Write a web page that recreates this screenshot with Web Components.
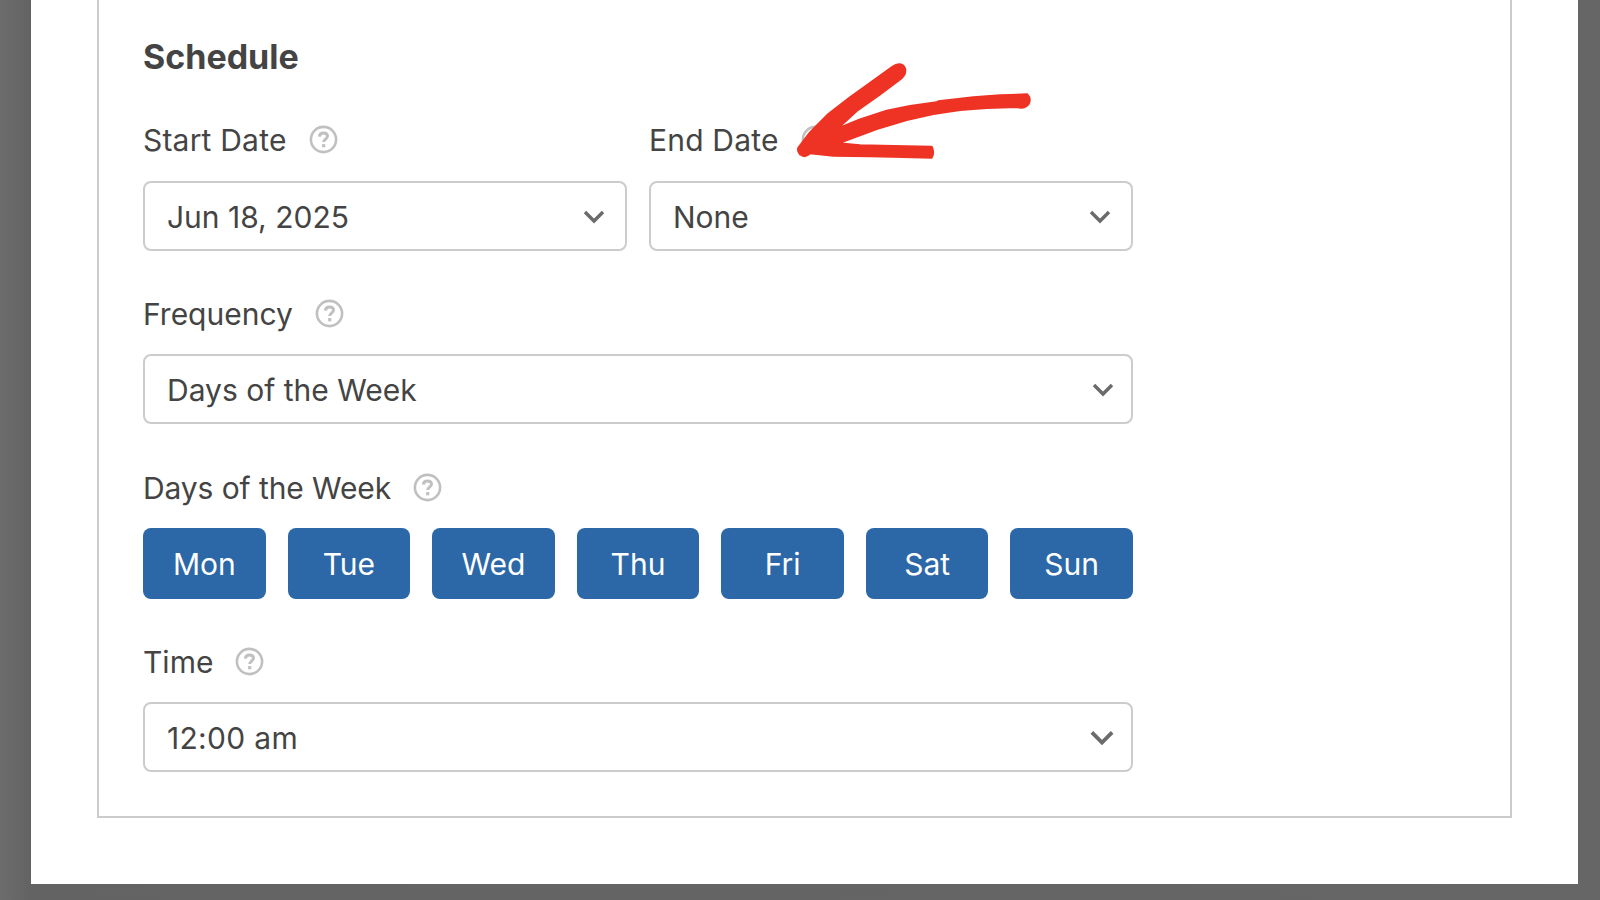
<!DOCTYPE html>
<html lang="en">
<head>
<meta charset="utf-8">
<title>Schedule</title>
<style>
  html, body { margin: 0; height: 100%; overflow: hidden; }
  body {
    background: linear-gradient(90deg, #6c6c6c 0, #636363 31px, #666 100%);
    font-family: Inter, "Liberation Sans", sans-serif;
    color: #444;
  }
</style>
</head>
<body>
<template id="help-tpl">
  <style>
    :host { display: inline-flex; width: 29px; height: 29px; margin-top: -1px; }
    svg { display: block; }
  </style>
  <svg width="29" height="29" viewBox="0 0 29 29" fill="none" stroke="#c0c0c0" stroke-width="2.6">
    <circle cx="14.5" cy="14.5" r="12.6"></circle>
    <path d="M10.4 11.600c.2-2.400 1.800-3.700 4.100-3.700 2.400 0 4 1.300 4 3.200 0 1.500-.8 2.300-2 3.100-1.300.9-1.800 1.500-1.800 2.900" stroke-width="3"></path>
    <path d="M14.700 19.100v3.200" stroke-width="3.200"></path>
  </svg>
</template>

<script>
/* global customElements, HTMLElement */
class HelpIcon extends HTMLElement {
  constructor () {
    super()
    const shadow = this.attachShadow({ mode: 'open' })
    shadow.appendChild(document.getElementById('help-tpl').content.cloneNode(true))
  }
}

class FieldLabel extends HTMLElement {
  constructor () {
    super()
    const shadow = this.attachShadow({ mode: 'open' })
    shadow.innerHTML = `
      <style>
        :host {
          display: flex;
          align-items: center;
          gap: 22px;
          height: 30px;
          margin-bottom: var(--label-space, 25px);
          font-size: 30px;
          line-height: 30px;
          color: #444;
        }
      </style>
      <span><slot></slot></span>
      <help-icon></help-icon>
    `
  }
}

class SelectBox extends HTMLElement {
  constructor () {
    super()
    const shadow = this.attachShadow({ mode: 'open' })
    shadow.innerHTML = `
      <style>
        :host {
          display: flex;
          align-items: center;
          justify-content: space-between;
          box-sizing: border-box;
          height: 70px;
          padding: 1px 19px 0 22px;
          border: 2px solid #ccc;
          border-radius: 8px;
          background: #fff;
          font-size: 30px;
          color: #444;
        }
        /* the frequency and time arrows sit a little further right */
        :host([shifted]) { padding-right: 16px; }
        :host([heavy]) { padding-right: 15px; letter-spacing: .3px; }
        svg { display: block; width: 24px; height: 16px; }
        :host([heavy]) svg { width: 28px; height: 18px; }
      </style>
      <span><slot></slot></span>
      <svg viewBox="0 0 24 16" fill="none" stroke="#6b6b6b" stroke-width="3.400">
        <path d="M3 3l9 9 9-9"></path>
      </svg>
    `
  }
}

class DayButton extends HTMLElement {
  constructor () {
    super()
    const shadow = this.attachShadow({ mode: 'open' })
    shadow.innerHTML = `
      <style>
        :host {
          display: flex;
          align-items: center;
          justify-content: center;
          height: 71px;
          border-radius: 8px;
          background: #2c67a7;
          color: #fff;
          font-size: 30px;
        }
      </style>
      <slot></slot>
    `
  }
}

class ScheduleForm extends HTMLElement {
  constructor () {
    super()
    const shadow = this.attachShadow({ mode: 'open' })
    shadow.innerHTML = `
      <style>
        :host {
          display: block;
          width: 1547px;
          height: 884px;
          margin-left: 31px;
          padding: 0 66px;
          box-sizing: border-box;
          background: #fff;
        }
        .card {
          box-sizing: border-box;
          height: 818px;
          padding: 38px 44px 0;
          border: 2px solid #ccc;
          border-top: 0;
        }
        h2 {
          margin: 0 0 49px;
          font-size: 34px;
          line-height: 38px;
          font-weight: 700;
          color: #444;
        }
        .fields { width: 990px; }
        .two { display: grid; grid-template-columns: 1fr 1fr; gap: 22px; --label-space: 26px; }
        .two field-label { letter-spacing: .2px; }
        .days { display: grid; grid-template-columns: repeat(7, 1fr); gap: 22px; }
        .row { margin-bottom: 48px; }
        .row.after-freq { margin-bottom: 49px; }
        .tight { letter-spacing: -.1px; }
      </style>
      <div class="card">
        <h2>Schedule</h2>
        <div class="fields">
          <div class="row two">
            <div><field-label>Start Date</field-label><select-box>Jun 18, 2025</select-box></div>
            <div><field-label>End Date</field-label><select-box>None</select-box></div>
          </div>
          <div class="row after-freq">
            <field-label>Frequency</field-label>
            <select-box shifted>Days of the Week</select-box>
          </div>
          <div class="row">
            <field-label class="tight">Days of the Week</field-label>
            <div class="days">
              <day-button>Mon</day-button>
              <day-button>Tue</day-button>
              <day-button>Wed</day-button>
              <day-button>Thu</day-button>
              <day-button>Fri</day-button>
              <day-button>Sat</day-button>
              <day-button>Sun</day-button>
            </div>
          </div>
          <div>
            <field-label>Time</field-label>
            <select-box heavy>12:00 am</select-box>
          </div>
        </div>
      </div>
    `
  }
}

class ArrowMark extends HTMLElement {
  constructor () {
    super()
    const shadow = this.attachShadow({ mode: 'open' })
    shadow.innerHTML = `
      <style>
        :host { position: absolute; left: 760px; top: 40px; width: 300px; height: 140px; }
        svg { display: block; }
      </style>
      <svg width="300" height="140" viewBox="0 0 900 420">
        <path fill="#ee3324" stroke="#ee3324" stroke-width="6" stroke-linejoin="round" d="M116 322L150 277L205 222L270 172L340 122L395 82Q425 62 435 85Q440 105 418 120L360 163L290 213L232 266L300 238L380 212L450 198L530 187L535 184L640 172L720 166L802 163Q814 175 806 192Q795 208 770 201L680 204L600 210L520 222L440 240L350 267L235 310L300 316L400 318L515 320Q524 338 515 353L430 351L330 349L220 347L150 340Q135 355 120 343Q110 330 116 322Z"></path>
      </svg>
    `
  }
}

customElements.define('help-icon', HelpIcon)
customElements.define('field-label', FieldLabel)
customElements.define('select-box', SelectBox)
customElements.define('day-button', DayButton)
customElements.define('schedule-form', ScheduleForm)
customElements.define('arrow-mark', ArrowMark)
</script>
<schedule-form></schedule-form>
<arrow-mark></arrow-mark>
</body>
</html>
